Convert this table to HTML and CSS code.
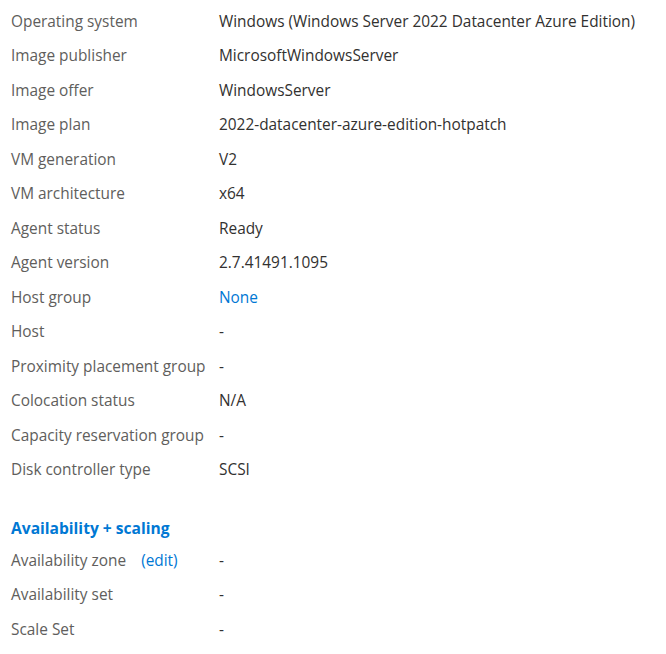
FILE: index.html
```html
<!DOCTYPE html>
<html lang="en">
<head>
  <meta charset="UTF-8">
  <title>Virtual machine properties</title>
  <link rel="stylesheet" href="styles.css">
</head>
<body>
  <!-- Properties list -->
  <dl class="props">
    <dt>Operating system</dt><dd>Windows (Windows Server 2022 Datacenter Azure Edition)</dd>
    <dt>Image publisher</dt><dd>MicrosoftWindowsServer</dd>
    <dt>Image offer</dt><dd>WindowsServer</dd>
    <dt>Image plan</dt><dd>2022-datacenter-azure-edition-hotpatch</dd>
    <dt>VM generation</dt><dd>V2</dd>
    <dt>VM architecture</dt><dd>x64</dd>
    <dt>Agent status</dt><dd>Ready</dd>
    <dt>Agent version</dt><dd>2.7.41491.1095</dd>
    <dt>Host group</dt><dd><a href="#">None</a></dd>
    <dt>Host</dt><dd>-</dd>
    <dt>Proximity placement group</dt><dd>-</dd>
    <dt>Colocation status</dt><dd>N/A</dd>
    <dt>Capacity reservation group</dt><dd>-</dd>
    <dt>Disk controller type</dt><dd>SCSI</dd>
  </dl>

  <h2 class="section-title">Availability + scaling</h2>
  <dl class="props">
    <dt>Availability zone <a href="#" class="edit">(edit)</a></dt><dd>-</dd>
    <dt>Availability set</dt><dd>-</dd>
    <dt>Scale Set</dt><dd>-</dd>
  </dl>
</body>
</html>
```

FILE: styles.css
```css
* {
  margin: 0;
  padding: 0;
  box-sizing: border-box;
}
body {
  font-family: "Open Sans", "Noto Sans", sans-serif;
  font-size: 15.4px;
  background: #fff;
  color: #323130;
  padding: 3.75px 0 0 11px;
}
a {
  color: #0078d4;
  text-decoration: none;
}
/* Label / value rows */
.props {
  display: grid;
  grid-template-columns: 208px 1fr;
  grid-auto-rows: 34.5px;
  align-items: center;
}
.props dt {
  color: #605e5c;
  white-space: nowrap;
}
.props dd {
  color: #323130;
  white-space: nowrap;
}
.edit {
  margin-left: 11px;
}
/* Section heading */
.section-title {
  font-size: 15.6px;
  font-weight: 700;
  color: #0078d4;
  line-height: 20px;
  margin: 31.25px 0 4.75px;
}
```
